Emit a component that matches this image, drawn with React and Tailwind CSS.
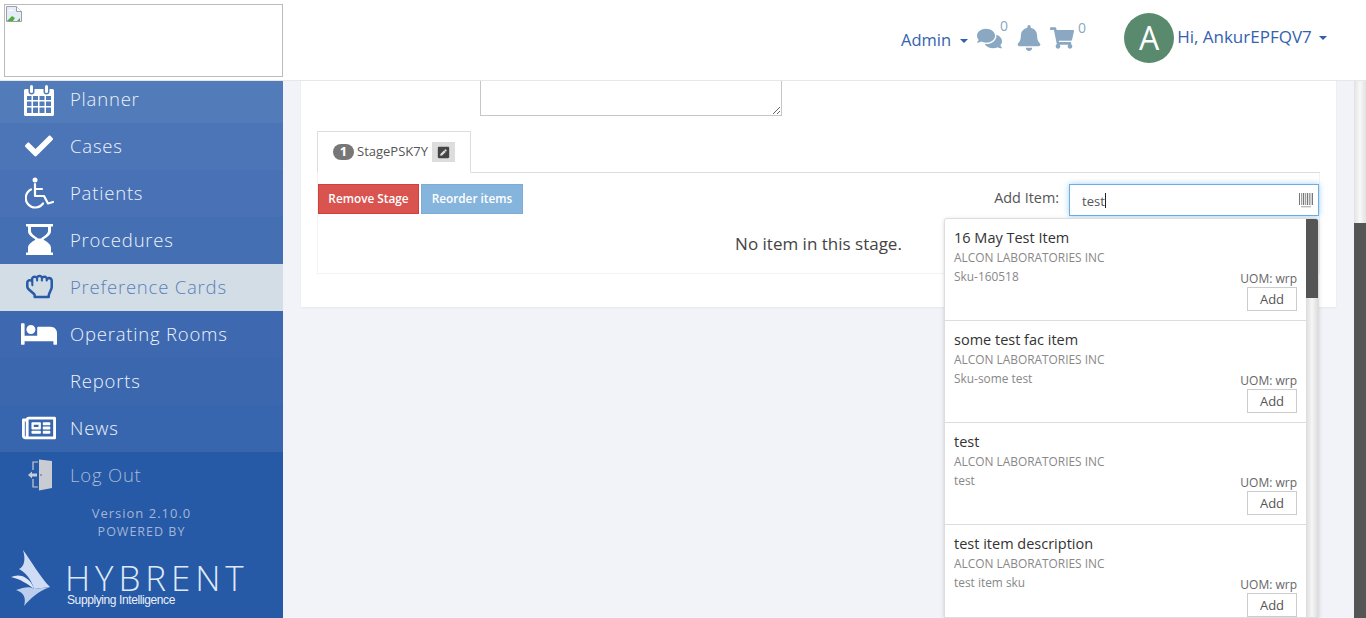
import React from 'react'
import { FaCheck, FaRegHandRock, FaBed, FaRegNewspaper, FaComments, FaBell, FaShoppingCart, FaPenSquare } from 'react-icons/fa'

function CalendarIcon() {
  return (
    <svg width="30" height="31" viewBox="0 0 30 31" fill="#fff" className="mt-[3px]">
      <path fillRule="evenodd" d="M1.5 4h3V6.500a3 3 0 0 0 6 0V4h9v2.500a3 3 0 0 0 6 0V4h3a1.500 1.500 0 0 1 1.500 1.500v24a1.500 1.500 0 0 1-1.500 1.500h-27A1.500 1.500 0 0 1 0 29.500v-24A1.500 1.500 0 0 1 1.500 4ZM3 11v4h4.500v-4Zm6 0v4h5v-4Zm6.500 0v4h5v-4Zm6.500 0v4h5v-4ZM3 16.500v4.500h4.500v-4.500Zm6 0v4.500h5v-4.500Zm6.500 0v4.500h5v-4.500Zm6.500 0v4.500h5v-4.500ZM3 22.500v5.500h4.500v-5.500Zm6 0v5.500h5v-5.500Zm6.500 0v5.500h5v-5.500Zm6.500 0v5.500h5v-5.500Z" />
      <rect x="6" y="0" width="3" height="8" rx="1.500" />
      <rect x="21" y="0" width="3" height="8" rx="1.500" />
    </svg>
  )
}

function WheelchairIcon() {
  return (
    <svg width="29" height="32" viewBox="0 0 29 32" fill="none" stroke="#fff" strokeWidth="2.200" strokeLinecap="round" strokeLinejoin="round">
      <circle cx="10" cy="3" r="2.500" fill="#fff" stroke="none" />
      <path d="M10 7v12h9l4 7.500 5-1.500" />
      <path d="M10 12h7" />
      <path d="M6 12.500a9.500 9.500 0 1 0 12 14" />
    </svg>
  )
}

function HourglassIcon() {
  return (
    <svg width="27" height="31" viewBox="0 0 27 31" fill="#fff">
      <rect x="0" y="0" width="27" height="2.500" />
      <rect x="0" y="28.500" width="27" height="2.500" />
      <path fillRule="evenodd" d="M2 2h23v5c0 4-4 6-7.500 8.500C21 18 25 20 25 24v5H2v-5c0-4 4-6 7.500-8.500C6 13 2 11 2 7ZM5 3v4c0 3 4 5 7 7.500h3C18 12 22 10 22 7V3Z" />
      <path d="M5 28v-3c1-3 5-5 8.500-6.500C17 20 21 22 22 25v3Z" />
    </svg>
  )
}

function DoorIcon() {
  return (
    <svg width="26" height="32" viewBox="0 0 26 32">
      <path d="M13 .5L26 2V29L13 31.500Z" fill="#c9ccd2" />
      <path d="M12 3H7v8M7 20v8h5" fill="none" stroke="#c9ccd2" strokeWidth="1.200" />
      <path d="M2 16l4-3.500v2h5v3H6v2Z" fill="#c9ccd2" />
      <circle cx="15" cy="16" r="0.800" fill="#33609f" />
    </svg>
  )
}

function BarcodeIcon() {
  return (
    <svg width="14" height="15" viewBox="0 0 14 15" fill="#777777" className="ml-auto mr-[1px]">
      <path d="M0 0h1v12H0Zm2 0h.700v12H2Zm1.800 0h1.400v12H3.800Zm2.400 0h.700v12h-.700Zm1.600 0h1.400v12H7.800Zm2.300 0h.700v12h-.700Zm1.500 0h.700v12h-.700Zm1.400 0h1v12h-1Z" />
      <path d="M2 13.500h10v.700H2Z" />
    </svg>
  )
}

function BirdLogo() {
  return (
    <svg width="40" height="60" viewBox="0 0 40 60">
      <path d="M13 1C20 10 30 28 40 38L24 40C22 33 18 25 9 20C14 18 16 11 13 1Z" fill="#cfdcf5" />
      <path d="M1 28C10 24 20 28 24 40C18 35 10 30 1 28Z" fill="#dfe8f9" />
      <path d="M40 38C28 42 20 50 14 57C16 50 15 44 6 41C14 38 20 37 24 40Z" fill="#bccded" />
    </svg>
  )
}

function BrokenImage() {
  return (
    <svg width="16" height="16" viewBox="0 0 16 16" className="absolute left-[1px] top-[1px]">
      <path d="M.5.5h10l5 5v10H.5Z" fill="#e6edf8" stroke="#9aa0a8" />
      <path d="M10.500.5v5h5" fill="#fff" stroke="#9aa0a8" />
      <path d="M1 15l5-5 3 2-2 3Z" fill="#4caf37" />
      <path d="M11 15l3-3v3Z" fill="#4caf37" />
      <path d="M2 5c2-2 4-2 6 0Z" fill="#fff" />
    </svg>
  )
}

const menu = [
  { label: 'Planner', icon: <CalendarIcon />, row: 'bg-[#527bb9] pb-[7px]', height: 'h-[42px]' },
  { label: 'Cases', icon: <FaCheck size={28} color="#fff" />, row: 'bg-[#4c75b7] pb-[2px]' },
  { label: 'Patients', icon: <WheelchairIcon />, row: 'bg-[#4872b5] pb-[2px]' },
  { label: 'Procedures', icon: <HourglassIcon />, row: 'bg-[#456fb3] pb-[2px]' },
  { label: 'Preference Cards', icon: <FaRegHandRock size={27} color="#2a5ba8" />, row: 'bg-[#d3dde6] pb-[2px]', text: 'text-[#5a7fba]' },
  { label: 'Operating Rooms', icon: <FaBed size={36} color="#fff" />, row: 'bg-[#3e69b0] pb-[2px]' },
  { label: 'Reports', icon: null, row: 'bg-[#3b67af] pb-[2px]' },
  { label: 'News', icon: <FaRegNewspaper size={34} color="#fff" />, row: 'bg-[#3866ae] pb-[2px]' },
  { label: 'Log Out', icon: <DoorIcon />, row: 'pb-[2px]', text: 'text-[#a9bbd8]' },
]

const items = [
  { title: '16 May Test Item', sku: 'Sku-160518' },
  { title: 'some test fac item', sku: 'Sku-some test' },
  { title: 'test', sku: 'test' },
  { title: 'test item description', sku: 'test item sku' },
]

function Caret({ className }) {
  return <span className={`inline-block w-0 h-0 border-x-4 border-x-transparent border-t-4 border-t-[#2f5fae] ${className}`} />
}

function Sidebar() {
  return (
    <aside className="w-[283px] shrink-0 bg-[#2659a6] flex flex-col">
      {menu.map(item => (
        <div key={item.label} className={`${item.height || 'h-[47px]'} ${item.row} flex items-center shrink-0`}>
          <div className="w-[78px] flex justify-center shrink-0">{item.icon}</div>
          <span className={`-ml-[8px] text-[18.500px] tracking-[0.800px] font-light ${item.text || 'text-[#eef3fa]'}`}>{item.label}</span>
        </div>
      ))}
      <div className="text-center text-[13px] tracking-[1px] text-[#a3b6d6] leading-[18px] mt-[5px]">
        <div>Version 2.10.0</div>
        <div className="text-[12.500px] mt-[1px]">POWERED BY</div>
      </div>
      <div className="flex items-start pl-[10px] mt-[8px]">
        <BirdLogo />
        <div className="ml-[15px] mt-[14px]">
          <div className="text-[35px] leading-[30px] font-light tracking-[4.900px] text-[#dfe9f8]">HYBRENT</div>
          <div className="font-['Liberation_Sans'] text-[12px] leading-[12px] -tracking-[0.400px] text-[#eaf0fa] mt-[1px] ml-[2px]">Supplying Intelligence</div>
        </div>
      </div>
    </aside>
  )
}

function Header() {
  return (
    <header className="h-[81px] shrink-0 bg-white border-b border-[#e7e7e7] flex items-start relative z-10">
      <div className="relative w-[279px] h-[73px] ml-[4px] mt-[4px] border border-[#bbbbbb]">
        <BrokenImage />
      </div>
      <div className="flex-1 flex items-start pl-[618px] text-[#3462ae]">
        <span className="text-[16.500px] mt-[29px] leading-[22px]">Admin</span>
        <Caret className="ml-[9px] mt-[39px]" />
        <FaComments size={25} color="#8aa8c2" className="ml-[9px] mt-[26px]" />
        <span className="text-[14px] leading-[16px] text-[#8aa8c2] -ml-[2px] mt-[18px]">0</span>
        <FaBell size={26} color="#8aa8c2" className="ml-[8px] mt-[25px]" />
        <FaShoppingCart size={24} color="#8aa8c2" className="ml-[8px] mt-[26px]" />
        <span className="text-[14px] leading-[16px] text-[#8aa8c2] ml-[4px] mt-[20px]">0</span>
        <div className="w-[50px] h-[50px] rounded-full bg-[#5a8a6e] text-white text-[32px] flex items-center justify-center ml-[38px] mt-[13px]">A</div>
        <span className="text-[17px] mt-[26px] leading-[22px] ml-[3px]">Hi, AnkurEPFQV7</span>
        <Caret className="ml-[7px] mt-[36px]" />
      </div>
    </header>
  )
}

function ResultRow({ item }) {
  return (
    <div className="h-[102px] shrink-0 border-b border-[#dddddd] px-[9px] pt-[9px] relative">
      <div className="text-[14.500px] leading-[20px] text-[#333333]">{item.title}</div>
      <div className="text-[11.900px] leading-[19px] text-[#888888]">ALCON LABORATORIES INC</div>
      <div className="text-[11.900px] leading-[19px] text-[#888888]">{item.sku}</div>
      <div className="absolute right-[9px] top-[52px] flex flex-col items-end">
        <span className="text-[12px] leading-[16px] text-[#666666]">UOM: wrp</span>
        <button className="w-[50px] h-[24px] border border-[#cccccc] text-[13px] text-[#555555] bg-white pt-[1px]">Add</button>
      </div>
    </div>
  )
}

function ItemDropdown() {
  return (
    <div className="absolute right-0 top-[45px] z-20 w-[375px] h-[400px] bg-white border border-[#dddddd] rounded-t-[3px] shadow-[0_1px_4px_rgba(0,0,0,0.15)] flex overflow-hidden">
      <div className="flex-1 flex flex-col min-w-0">
        {items.map(item => <ResultRow key={item.title} item={item} />)}
      </div>
      <div className="w-[12px] shrink-0 bg-gradient-to-r from-[#dcdcdc] via-[#f6f6f6] to-[#dcdcdc]">
        <div className="h-[79px] bg-[#555555]" />
      </div>
    </div>
  )
}

function StageCard() {
  return (
    <section className="bg-white -mt-[10px] h-[236px] shrink-0 px-[16px] shadow-[0_1px_2px_rgba(0,0,0,0.05)]">
      <div className="pl-[163px]">
        <textarea className="block w-[302px] h-[45px] border border-[#c6c6c6] bg-white outline-none" />
      </div>
      <div className="mt-[15px] h-[42px] border-b border-[#dddddd] flex">
        <div className="h-[42px] w-[154px] border border-[#dddddd] border-b-white bg-white flex items-center pl-[15px]">
          <span className="w-[21px] h-[16px] rounded-full bg-[#777777] text-white text-[13px] font-bold flex items-center justify-center">1</span>
          <span className="ml-[3px] text-[13px] text-[#555555]">StagePSK7Y</span>
          <span className="ml-[4px] w-[23px] h-[20px] bg-[#dddddd] flex items-center justify-center">
            <FaPenSquare size={13} color="#444444" />
          </span>
        </div>
      </div>
      <div className="border-x border-b border-[#f3f3f3] h-[101px] relative">
        <div className="flex items-start justify-between pt-[11px]">
          <div className="flex gap-[2px]">
            <button className="w-[101px] h-[30px] bg-[#d9534f] border border-[#d43f3a] text-white text-[11.800px] font-semibold">Remove Stage</button>
            <button className="w-[102px] h-[30px] bg-[#85b4dc] border border-[#7dadd6] text-white text-[11.800px] font-semibold">Reorder items</button>
          </div>
          <div className="flex items-start">
            <span className="text-[14.400px] leading-[28px] text-[#555555] mr-[10px]">Add Item:</span>
            <div className="w-[250px] h-[32px] border border-[#66afe9] shadow-[0_0_6px_rgba(102,175,233,0.6)] flex items-center pl-[12px] pr-[4px] bg-white">
              <span className="text-[13px] leading-[18px] mt-[1px] text-[#555555]">test</span>
              <span className="w-[1px] h-[15px] bg-[#222222] mt-[1px]" />
              <BarcodeIcon />
            </div>
          </div>
        </div>
        <div className="text-center text-[17px] text-[#444444] mt-[17px] leading-[22px]">No item in this stage.</div>
        <ItemDropdown />
      </div>
    </section>
  )
}

export default function App() {
  return (
    <div className="h-screen overflow-hidden flex flex-col bg-[#f1f3f8] font-['Open_Sans',sans-serif]">
      <Header />
      <div className="flex-1 flex min-h-0">
        <Sidebar />
        <main className="flex-1 min-w-0 px-[18px] overflow-visible">
          <StageCard />
        </main>
        <div className="w-[12px] shrink-0 bg-gradient-to-r from-[#e2e2e2] via-[#f8f8f8] to-[#e2e2e2] flex flex-col">
          <div className="h-[142px] shrink-0" />
          <div className="flex-1 bg-[#555555]" />
        </div>
      </div>
    </div>
  )
}
